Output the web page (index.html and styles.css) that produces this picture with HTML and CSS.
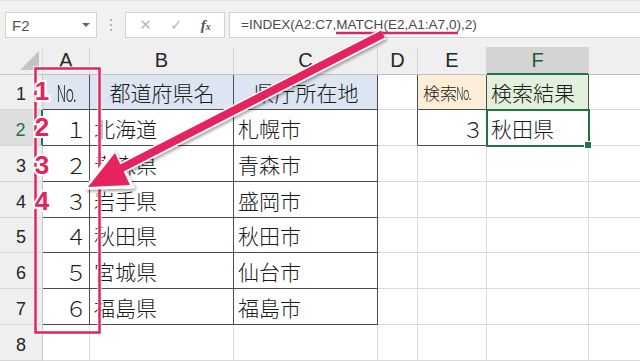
FILE: index.html
```html
<!DOCTYPE html>
<html>
<head>
<meta charset="utf-8">
<title>INDEX MATCH</title>
<link rel="stylesheet" href="styles.css">
</head>
<body>
<div class="app">
  <div class="fbar">
    <div class="namebox"><span>F2</span><i class="caret"></i></div>
    <div class="dots"><b></b><b></b><b></b></div>
    <div class="btns"><span class="ico">&#x2715;</span><span class="ico">&#x2713;</span><span class="fx">f<sub>x</sub></span></div>
    <div class="formula">=INDEX(A2:C7,MATCH(E2,A1:A7,0),2)</div>
  </div>

  <div class="sheet">
    <div class="corner"><i></i></div>
    <div class="ch">A</div><div class="ch">B</div><div class="ch">C</div><div class="ch">D</div><div class="ch">E</div><div class="ch on">F</div><div class="ch end"></div>

    <div class="rh dk">1</div>
    <div class="c bd hd mid"><span class="no">No.</span></div>
    <div class="c bd hd mid">都道府県名</div>
    <div class="c bd hd mid">県庁所在地</div>
    <div class="c dr"></div>
    <div class="c bd e1">検索<span class="no sm">No.</span></div>
    <div class="c bd f1">検索結果</div>
    <div class="c end"></div>

    <div class="rh dk on">2</div>
    <div class="c bd num">１</div>
    <div class="c bd">北海道</div>
    <div class="c bd">札幌市</div>
    <div class="c dr"></div>
    <div class="c bd num">３</div>
    <div class="c bd sel">秋田県</div>
    <div class="c end"></div>

    <div class="rh dk">3</div>
    <div class="c bd num">２</div>
    <div class="c bd">青森県</div>
    <div class="c bd">青森市</div>
    <div class="c"></div><div class="c"></div><div class="c"></div><div class="c end"></div>

    <div class="rh dk">4</div>
    <div class="c bd num">３</div>
    <div class="c bd">岩手県</div>
    <div class="c bd">盛岡市</div>
    <div class="c"></div><div class="c"></div><div class="c"></div><div class="c end"></div>

    <div class="rh dk">5</div>
    <div class="c bd num">４</div>
    <div class="c bd">秋田県</div>
    <div class="c bd">秋田市</div>
    <div class="c"></div><div class="c"></div><div class="c"></div><div class="c end"></div>

    <div class="rh dk">6</div>
    <div class="c bd num">５</div>
    <div class="c bd">宮城県</div>
    <div class="c bd">仙台市</div>
    <div class="c"></div><div class="c"></div><div class="c"></div><div class="c end"></div>

    <div class="rh dk">7</div>
    <div class="c bd num">６</div>
    <div class="c bd">福島県</div>
    <div class="c bd">福島市</div>
    <div class="c"></div><div class="c"></div><div class="c"></div><div class="c end"></div>

    <div class="rh">8</div>
    <div class="c"></div><div class="c"></div><div class="c"></div><div class="c"></div><div class="c"></div><div class="c"></div><div class="c end"></div>
  </div>

  <!-- annotations drawn over the sheet -->
  <svg class="marks" width="640" height="361" viewBox="0 0 640 361">
    <defs>
      <filter id="sh" x="-10%" y="-10%" width="130%" height="130%">
        <feDropShadow dx="1.5" dy="2" stdDeviation="1.5" flood-color="#000" flood-opacity=".35"/>
      </filter>
    </defs>
    <line x1="336" y1="33" x2="458" y2="33" stroke="#e0245c" stroke-width="2.5"/>
    <rect x="35.5" y="68.5" width="64" height="264" fill="none" stroke="#fff" stroke-width="4.5" opacity=".8"/>
    <rect x="35.5" y="68.5" width="64" height="264" fill="none" stroke="#e0245c" stroke-width="2.5"/>
    <g filter="url(#sh)">
      <line x1="383" y1="34" x2="118" y2="170" stroke="#fff" stroke-width="11"/>
      <polygon points="86,188 133,187 113,150" fill="#fff" stroke="#fff" stroke-width="3" stroke-linejoin="round"/>
      <line x1="383" y1="34" x2="118" y2="170" stroke="#e6245e" stroke-width="8"/>
      <polygon points="88,187 130,185 115,153" fill="#e6245e"/>
    </g>
    <g class="badge">
      <text x="42" y="91">1</text>
      <text x="42" y="127">2</text>
      <text x="42" y="165">3</text>
      <text x="42" y="201">4</text>
    </g>
  </svg>
</div>
</body>
</html>
```

FILE: styles.css
```css
body{
margin:0;
font-family:"Noto Sans CJK JP","Liberation Sans",sans-serif;
background:#fff;
}
.app{
position:relative;
width:640px;
height:361px;
overflow:hidden;
background:#fff;
}

/* formula bar */
.fbar{
height:47px;
box-sizing:border-box;
padding:11px 0 0 5px;
display:flex;
align-items:flex-start;
background:#f1f1f1;
border-top:1px solid #e2e2e2;
}
.namebox{
width:92px;
height:26px;
box-sizing:border-box;
background:#fff;
border:1px solid #d2d2d2;
display:flex;
align-items:center;
justify-content:space-between;
padding:0 6px 0 6px;
font:15px "Liberation Sans",sans-serif;
color:#555;
}
.caret{
width:0;height:0;
border-left:4px solid transparent;
border-right:4px solid transparent;
border-top:4px solid #666;
}
.dots{
width:28px;
height:26px;
display:flex;
flex-direction:column;
align-items:center;
justify-content:center;
gap:3px;
}
.dots b{width:2px;height:2px;background:#b5b5b5;display:block;}
.btns{
width:100px;
height:26px;
box-sizing:border-box;
background:#fff;
border:1px solid #d2d2d2;
display:flex;
align-items:center;
justify-content:space-around;
padding:0 4px;
color:#b9b9b9;
font:15px "DejaVu Sans",sans-serif;
}
.fx{
font:italic bold 15px "Liberation Serif",serif;
color:#555;
}
.fx sub{font-size:10px;vertical-align:0;}
.formula{
flex:1;
margin-left:4px;
height:26px;
box-sizing:border-box;
background:#fff;
border:1px solid #d2d2d2;
border-right:0;
padding-left:11px;
font:13.55px/23px "Liberation Sans",sans-serif;
color:#4a4a4a;
white-space:nowrap;
}

/* sheet */
.sheet{
display:grid;
grid-template-columns:43px 47px 144px 144px 40px 69px 102px 1fr;
grid-template-rows:28px 35px 36px 36px 36px 35px 36px 36px 1fr;
height:314px;
}
.sheet>div{
box-sizing:border-box;
border-right:1px solid #dadada;
border-bottom:1px solid #dadada;
min-width:0;
}
.corner{
background:#efefef;
position:relative;
border-bottom-color:#c8c8c8 !important;
}
.corner i{
position:absolute;
right:3px;bottom:4px;
width:0;height:0;
border-left:19px solid transparent;
border-bottom:19px solid #c4c4c4;
}
.ch{
background:#efefef;
border-right-color:#d6d6d6 !important;
border-bottom-color:#c0c0c0 !important;
display:flex;
align-items:center;
justify-content:center;
font:20px "Liberation Sans",sans-serif;
color:#262626;
}
.ch.on{
background:#d4d4d4;
color:#1f5a36;
border-bottom:2px solid #217346 !important;
}
.rh{
background:#efefef;
display:flex;
align-items:flex-end;
justify-content:center;
padding-bottom:4px;
font:18px "Liberation Sans",sans-serif;
color:#262626;
border-right-color:#c8c8c8 !important;
border-bottom-color:#d6d6d6 !important;
}
.rh.on{
background:#dedede;
color:#217346;
border-right:2px solid #217346 !important;
}
.c{
display:flex;
align-items:center;
padding:0 3px 0 4px;
font-size:21px;
font-weight:300;
color:#1a1a1a;
white-space:nowrap;
overflow:hidden;
}
.sheet>.bd{
border-right:1px solid #4d4d4d;
border-bottom:1px solid #4d4d4d;
}
.sheet>.dr{border-right:1px solid #4d4d4d;}
.sheet>.end{border-right:0;}
.hd{background:#dce5f1;}
.mid{justify-content:center;}
.num{justify-content:flex-end;padding-right:2px;font-size:22px;}
.no{
display:inline-block;
font-size:23px;
transform:scaleX(.6);
transform-origin:center;
letter-spacing:-1px;
}
.e1{
background:#fdeed8;
font-size:17px;
padding-left:5px;
}
.no.sm{font-size:18px;transform-origin:left;margin-left:-1px;}
.f1{background:#e3f0dc;}
.sel{
position:relative;
overflow:visible;
outline:2px solid #217346;
outline-offset:-1px;
}
.sel::after{
content:"";
position:absolute;
right:-4px;bottom:-4px;
width:6px;height:6px;
background:#217346;
border:1px solid #fff;
}

/* annotations */
.marks{
position:absolute;
left:0;top:0;
pointer-events:none;
}
.badge text{
font:bold 26px "Liberation Sans",sans-serif;
fill:#e0245c;
stroke:#fff;
stroke-width:4px;
paint-order:stroke;
text-anchor:middle;
dominant-baseline:central;
}
```
